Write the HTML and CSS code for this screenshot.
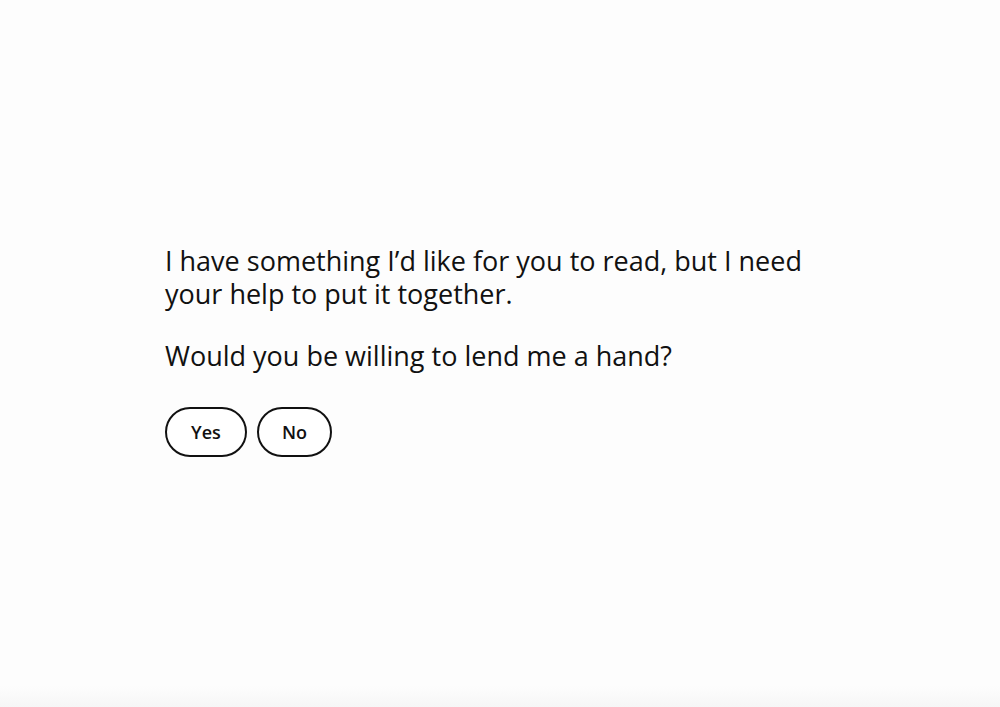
FILE: index.html
```html
<!DOCTYPE html>
<html lang="en">
<head>
<meta charset="utf-8">
<title>Lend me a hand</title>
<link rel="stylesheet" href="styles.css">
</head>
<body>
<main class="page">
  <section class="prompt">
    <p class="text">I have something I’d like for you to read, but I need your help to put it together.</p>
    <p class="text">Would you be willing to lend me a hand?</p>
    <div class="choices">
      <button class="choice choice-yes">Yes</button>
      <button class="choice choice-no">No</button>
    </div>
  </section>
</main>
</body>
</html>
```

FILE: styles.css
```css
html, body {
  margin: 0;
  padding: 0;
  height: 100%;
}
body {
  background: #fdfdfd;
  color: #111;
  font-family: "Open Sans", "Liberation Sans", sans-serif;
}
.page {
  min-height: 100%;
  box-sizing: border-box;
  padding: 244px 0 0 165px;
  background: linear-gradient(to bottom, #fdfdfd 0, #fdfdfd 97%, #f6f6f6 100%);
}
.prompt {
  width: 660px;
}
.text {
  margin: 0 0 29px;
  font-size: 27px;
  line-height: 33px;
}
.choices {
  display: flex;
  gap: 10px;
  margin-top: 35px;
}
.choice {
  height: 50px;
  padding: 0;
  border: 2px solid #111;
  border-radius: 25px;
  background: #fff;
  color: #111;
  font-family: "Open Sans", "Liberation Sans", sans-serif;
  font-weight: 600;
  font-size: 18px;
}
.choice-yes { width: 82px; }
.choice-no { width: 75px; }
```
